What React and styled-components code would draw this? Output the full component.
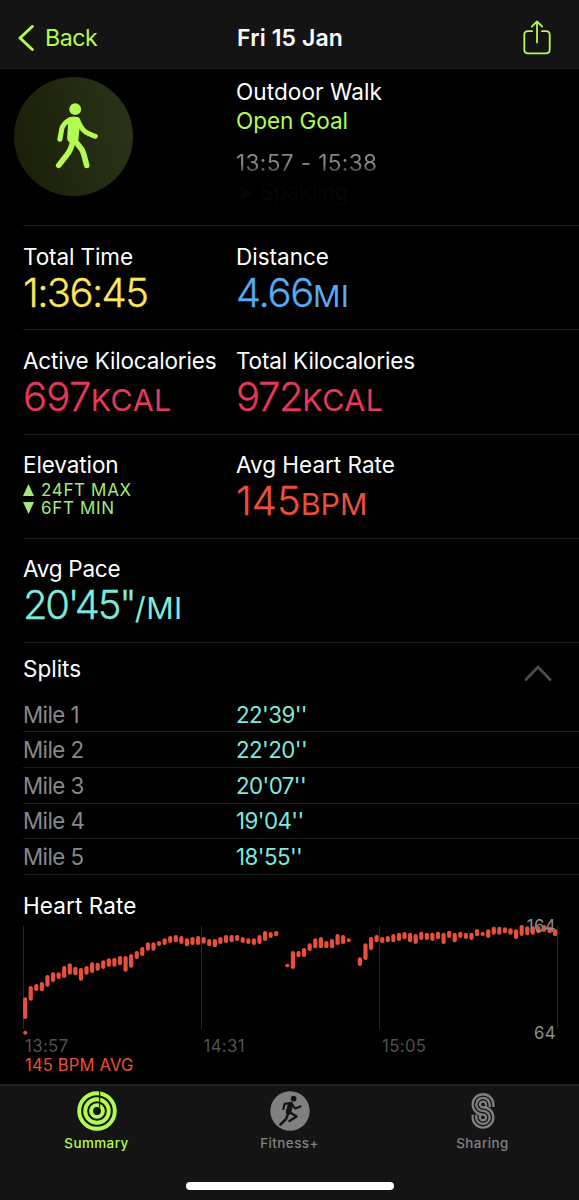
import React, {useState} from 'react';
import styled, {createGlobalStyle} from 'styled-components';

const GlobalStyle = createGlobalStyle`
    * {
        box-sizing: border-box;
    }

    body {
        margin: 0;
        background: #000000;
        color: #ffffff;
        font-family: Inter, "Liberation Sans", sans-serif;
        overflow: hidden;
    }
`;

const Screen = styled.div`
    display: flex;
    flex-direction: column;
    width: 579px;
    height: 1200px;
    background: #000000;
    overflow: hidden;
`;

const Header = styled.header`
    display: grid;
    grid-template-columns: 1fr auto 1fr;
    align-items: center;
    flex: none;
    height: 69px;
    padding: 7px 18px 0;
    background: #141414;
    border-bottom: 1px solid #1c1c1c;
`;

const BackButton = styled.button`
    display: flex;
    align-items: center;
    gap: 10px;
    height: 40px;
    padding: 0;
    border: none;
    background: none;
    color: #b4fb51;
    font: 400 23.2px/28px Inter, sans-serif;
    letter-spacing: -0.45px;
    cursor: pointer;
`;

const Title = styled.h1`
    margin: 0;
    padding-left: 1px;
    font-size: 23px;
    font-weight: 600;
    line-height: 28px;
    letter-spacing: 0.1px;
`;

const ShareButton = styled.button`
    display: flex;
    justify-self: end;
    margin: -1px 10px 0 0;
    padding: 0;
    border: none;
    background: none;
    cursor: pointer;
`;

const Intro = styled.section`
    display: grid;
    grid-template-columns: 222px 1fr;
    flex: none;
    height: 156px;
    padding: 8px 0 0 14px;
`;

const Badge = styled.div`
    display: flex;
    justify-content: center;
    align-items: center;
    width: 119px;
    height: 119px;
    border-radius: 50%;
    background: linear-gradient(80deg, #1a1e08, #2a3418);
`;

const IntroText = styled.div`
    display: flex;
    align-items: flex-start;
    flex-direction: column;
    font-size: 22.6px;
    line-height: 29px;
    letter-spacing: 0.05px;
`;

const Goal = styled.span`
    color: #b4fb51;
    letter-spacing: -0.1px;
`;

const TimeRange = styled.span`
    margin-top: 13px;
    background: linear-gradient(#88888c 55%, #3c3c3e 85%);
    background-clip: text;
    color: transparent;
    letter-spacing: 0.36px;
`;

const Place = styled.span`
    color: #060606;
    letter-spacing: -0.7px;
`;

const Row = styled.section`
    display: grid;
    grid-template-columns: 213px 1fr;
    flex: none;
    height: 104.3px;
    margin-left: 23px;
    padding-top: 16.6px;
    border-top: 1px solid #1b1b1b;
`;

const Label = styled.div`
    height: 28px;
    font-size: 22.5px;
    line-height: 28px;
    letter-spacing: ${(props) => props.$spacing || 0}px;
    white-space: nowrap;
`;

const Value = styled.div`
    font-size: 40px;
    font-weight: 300;
    line-height: 44px;
    letter-spacing: ${(props) => props.$spacing || 0}px;
    color: ${(props) => props.$color};
    -webkit-text-stroke: 0.3px ${(props) => props.$color};
    white-space: nowrap;
`;

const Unit = styled.span`
    font-size: 30.4px;
    font-weight: 400;
    letter-spacing: ${(props) => props.$spacing || 0}px;
    -webkit-text-stroke: 0;
`;

const ElevationList = styled.div`
    padding-top: 2px;
`;

const Elevation = styled.div`
    display: flex;
    align-items: center;
    gap: 7px;
    height: 18px;
    color: #a5e87d;
    font-size: 17px;
    line-height: 18px;
    letter-spacing: 0.65px;
`;

const Arrow = styled.svg`
    flex: none;
    width: 11px;
    height: 12px;
    transform: ${(props) => props.$down ? 'rotate(180deg)' : 'none'};
`;

const SplitsHeader = styled.button`
    display: flex;
    justify-content: space-between;
    flex: none;
    height: 54.6px;
    margin-left: 23px;
    padding: 12px 27px 0 0;
    border: none;
    border-top: 1px solid #1b1b1b;
    background: none;
    color: #ffffff;
    font: 400 22.5px/28px Inter, sans-serif;
    cursor: pointer;
`;

const SplitRow = styled.div`
    display: grid;
    grid-template-columns: 213px 1fr;
    flex: none;
    height: 35.6px;
    margin-left: 23px;
    padding-top: 3.8px;
    border-bottom: 1px solid #1b1b1b;
    color: #88888c;
    font-size: 22.3px;
    line-height: 28px;
    letter-spacing: -0.55px;
`;

const Pace = styled.span`
    color: #7eeadf;
`;

const HeartRate = styled.section`
    display: flex;
    flex-direction: column;
    flex: 1;
    min-height: 0;
    padding: 17px 0 0 23px;
`;

const ChartArea = styled.div`
    position: relative;
    width: 535px;
    height: 110px;
    margin-top: 5px;
`;

const AxisValue = styled.span`
    position: absolute;
    right: 2px;
    top: ${(props) => props.$top}px;
    color: #8e8e91;
    font-size: 16.8px;
    line-height: 20px;
    letter-spacing: 0.4px;
`;

const AxisTimes = styled.div`
    display: grid;
    grid-template-columns: repeat(3, 178.5px);
    margin-top: 1px;
    padding-left: 2px;
    color: #515153;
    font-size: 16.8px;
    line-height: 20px;
    letter-spacing: 0.35px;
`;

const Average = styled.div`
    padding-left: 2px;
    color: #e8503a;
    font-size: 16.6px;
    line-height: 19px;
    letter-spacing: 0.15px;
`;

const TabBar = styled.nav`
    display: grid;
    grid-template-columns: repeat(3, 1fr);
    flex: none;
    height: 116px;
    background: #141414;
    border-top: 2px solid #222222;
`;

const Tab = styled.button`
    display: flex;
    align-items: center;
    flex-direction: column;
    height: 70px;
    padding: 5px 0 0;
    border: none;
    background: none;
    color: ${(props) => props.$active ? '#b4fb51' : '#808080'};
    font: 500 13.4px/20px Inter, sans-serif;
    letter-spacing: 0.45px;
    cursor: pointer;

    > svg {
        flex: none;
        margin-bottom: 2px;
    }
`;

const HomeIndicator = styled.div`
    grid-column: 1 / -1;
    justify-self: center;
    align-self: end;
    width: 208px;
    height: 8px;
    margin-bottom: 10px;
    border-radius: 4px;
    background: #ffffff;
`;

const STATS = [
    [
        {label: 'Total Time', value: '1:36:45', color: '#fde65a', spacing: -1.6, labelSpacing: -0.1},
        {label: 'Distance', value: '4.66', unit: 'MI', color: '#56acf2', spacing: -1.3, unitSpacing: 0.4},
    ],
    [
        {label: 'Active Kilocalories', value: '697', unit: 'KCAL', color: '#e3395b', spacing: -0.7, unitSpacing: 0.5, labelSpacing: -0.17},
        {label: 'Total Kilocalories', value: '972', unit: 'KCAL', color: '#e3395b', spacing: -1.3, unitSpacing: 0.5, labelSpacing: -0.17},
    ],
    [
        {label: 'Elevation', max: '24FT MAX', min: '6FT MIN', labelSpacing: -0.1},
        {label: 'Avg Heart Rate', value: '145', unit: 'BPM', color: '#e8503a'},
    ],
    [
        {label: 'Avg Pace', value: '20\'45"', unit: '/MI', color: '#7eeadf', spacing: -2.2, unitSpacing: 0.5, labelSpacing: -0.25},
    ],
];

const SPLITS = ["22'39''", "22'20''", "20'07''", "19'04''", "18'55''"];

// [top, bottom] of every reading in thirds of a pixel, null where the watch lost contact
const READINGS = [
    [322, 387], [288, 332], [282, 303], [276, 304], [255, 290], [247, 276], [247, 267], [228, 264],
    [220, 254], [230, 256], [234, 272], [228, 254], [217, 249], [218, 242], [211, 237], [205, 230],
    [203, 230], [198, 226], [198, 245], [192, 233], [183, 207], [171, 198], [157, 182], [157, 182],
    [153, 168], [145, 165], [138, 159], [135, 157], [138, 162], [145, 169], [141, 165], [138, 165],
    [141, 161], [147, 169], [147, 172], [141, 162], [135, 159], [135, 157], [135, 153], [141, 159],
    [145, 162], [145, 165], [135, 162], [123, 153], [126, 144], [123, 139], null, [221, 232],
    [183, 237], [183, 202], [174, 201], [160, 183], [145, 175], [141, 175], [153, 175], [147, 175],
    [132, 165], [135, 162], [145, 156], null, [202, 228], [160, 210], [141, 180], [135, 157],
    [141, 159], [138, 157], [132, 157], [128, 153], [126, 148], [128, 157], [132, 162], [125, 150],
    [128, 150], [128, 153], [125, 148], [128, 162], [122, 144], [128, 157], [125, 144], [128, 147],
    [128, 150], [117, 139], [126, 138], [118, 144], [110, 134], [110, 134], [112, 130], [115, 134],
    [118, 147], [105, 138], [109, 136], [109, 134], [108, 130], [105, 126], [110, 130], [117, 139],
];

const WalkIcon = () => (
    <svg width="48" height="68" viewBox="-0.500 2.300 48 68" fill="none" stroke="#b4fb51" strokeLinecap="round"
         strokeLinejoin="round">
        <circle cx="24.700" cy="8.500" r="5.900" fill="#b4fb51" stroke="none"/>
        <path d="M18 17.500Q22 14.500 27 16.500Q30 18 29.500 22L28 38.500Q27 43 22.500 42.500Q16.600 41.500 16.600 37Z"
              fill="#b4fb51" stroke="none"/>
        <path d="M19.500 19Q12.500 23 11.300 28L9.400 38.600" strokeWidth="5"/>
        <path d="M27 19Q30 27 34 30.500Q37 33 44.800 35.600" strokeWidth="5"/>
        <path d="M22.500 40Q20.500 49.500 16.500 54L8.200 64.700" strokeWidth="5.600"/>
        <path d="M24.500 40L31.500 49Q33 51.500 36.200 64.700" strokeWidth="5.600"/>
    </svg>
);

const ShareIcon = () => (
    <svg width="28" height="35" viewBox="0 0 28 35" fill="none" stroke="#b4fb51" strokeWidth="1.8"
         strokeLinecap="round" strokeLinejoin="round">
        <path d="M9 11.200H5Q1.300 11.200 1.300 14.800V29.500Q1.300 33.300 5 33.300H23Q26.700 33.300 26.700 29.500V14.800Q26.700 11.200 23 11.200H19"/>
        <path d="M14 22.500V1.700M8.800 6.700L14 1.500L19.200 6.700"/>
    </svg>
);

const RingsIcon = () => (
    <svg width="40" height="40" viewBox="0 0 40 40" fill="none" stroke="#b4fb51" strokeWidth="3.900">
        <circle cx="20" cy="20" r="17.800"/>
        <circle cx="20" cy="20" r="11.800"/>
        <circle cx="20" cy="20" r="5.900"/>
        <path d="M22.600 0V16.500" stroke="#141414" strokeWidth="1.200"/>
    </svg>
);

const RunIcon = () => (
    <svg width="40" height="40" viewBox="0 0 40 40" fill="none" stroke="#141414" strokeLinecap="round"
         strokeLinejoin="round">
        <circle cx="20" cy="20" r="19.700" fill="#808080" stroke="none"/>
        <circle cx="23.600" cy="7.700" r="2.900" fill="#141414" stroke="none"/>
        <path d="M20.500 13.500L18.500 21" strokeWidth="5.400"/>
        <path d="M20 12L14.700 12.800L13.300 18" strokeWidth="2.200"/>
        <path d="M22 13L25 17.500L30.500 15.500" strokeWidth="2.200"/>
        <path d="M18.500 22L16 28L10.500 33.500" strokeWidth="2.600"/>
        <path d="M20 21.500L26.500 25.500L19.500 30" strokeWidth="2.600"/>
    </svg>
);

const S_PATH = 'M26.700 16V13.400A6.700 6.500 0 1 0 20 19.900A6.700 6.500 0 1 1 13.300 26.400V23.800';

const SharingIcon = () => (
    <svg width="40" height="40" viewBox="0 0 40 40" fill="none">
        <path d={S_PATH} stroke="#808080" strokeWidth="9.600"/>
        <path d={S_PATH} stroke="#141414" strokeWidth="5"/>
        <path d={S_PATH} stroke="#808080" strokeWidth="2.400"/>
    </svg>
);

const Stat = ({stat}) => (
    <div>
        <Label $spacing={stat.labelSpacing}>{stat.label}</Label>
        {stat.value ?
            <Value $color={stat.color} $spacing={stat.spacing}>
                {stat.value}{stat.unit && <Unit $spacing={stat.unitSpacing}>{stat.unit}</Unit>}
            </Value>
            :
            <ElevationList>
                <Elevation>
                    <Arrow viewBox="0 0 11 12"><path d="M5.500 0L11 12H0Z" fill="currentColor"/></Arrow>
                    {stat.max}
                </Elevation>
                <Elevation>
                    <Arrow $down viewBox="0 0 11 12"><path d="M5.500 0L11 12H0Z" fill="currentColor"/></Arrow>
                    {stat.min}
                </Elevation>
            </ElevationList>
        }
    </div>
);

const Chart = () => (
    <ChartArea>
        <svg width="535" height="110" viewBox="23 925 535 110">
            {[23.500, 201.500, 379.500, 557.500].map((x) => (
                <path key={x} d={`M${x} 926V1029`} stroke="#262626" strokeWidth="1"/>
            ))}
            {READINGS.map((r, i) => r && (
                <rect key={i} x={23.05 + i * 5.579} y={890 + r[0] / 3} width="4.200" height={(r[1] - r[0]) / 3}
                      rx="2" fill="#e8503a"/>
            ))}
            <circle cx="25.200" cy="1032.700" r="2" fill="#e8503a"/>
        </svg>
        <AxisValue $top={-8.5}>164</AxisValue>
        <AxisValue $top={98.5}>64</AxisValue>
    </ChartArea>
);

const App = () => {
    const [isOpen, setIsOpen] = useState(true);
    const [tab, setTab] = useState('Summary');

    return (
        <>
            <GlobalStyle/>
            <Screen>
                <Header>
                    <BackButton>
                        <svg width="17" height="28" viewBox="0 0 17 28" fill="none" stroke="#b4fb51"
                             strokeWidth="3" strokeLinecap="round" strokeLinejoin="round">
                            <path d="M14.300 2.500L2 14L14.300 25.500"/>
                        </svg>
                        Back
                    </BackButton>
                    <Title>Fri 15 Jan</Title>
                    <ShareButton><ShareIcon/></ShareButton>
                </Header>
                <Intro>
                    <Badge><WalkIcon/></Badge>
                    <IntroText>
                        <span>Outdoor Walk</span>
                        <Goal>Open Goal</Goal>
                        <TimeRange>13:57 - 15:38</TimeRange>
                        <Place>➤ Spalding</Place>
                    </IntroText>
                </Intro>
                {STATS.map((row) => (
                    <Row key={row[0].label}>
                        {row.map((stat) => <Stat key={stat.label} stat={stat}/>)}
                    </Row>
                ))}
                <SplitsHeader onClick={() => setIsOpen(!isOpen)}>
                    Splits
                    <svg width="28" height="38" viewBox="0 0 28 38" fill="none" stroke="#4b4b4d"
                         strokeWidth="2.800" strokeLinecap="round" strokeLinejoin="round">
                        <path d="M2 24.500L14 12L26 24.500"/>
                    </svg>
                </SplitsHeader>
                {isOpen && SPLITS.map((pace, i) => (
                    <SplitRow key={i}>
                        <span>Mile {i + 1}</span>
                        <Pace>{pace}</Pace>
                    </SplitRow>
                ))}
                <HeartRate>
                    <Label $spacing={0.1}>Heart Rate</Label>
                    <Chart/>
                    <AxisTimes>
                        <span>13:57</span>
                        <span>14:31</span>
                        <span>15:05</span>
                    </AxisTimes>
                    <Average>145 BPM AVG</Average>
                </HeartRate>
                <TabBar>
                    <Tab $active={tab === 'Summary'} onClick={() => setTab('Summary')}><RingsIcon/>Summary</Tab>
                    <Tab $active={tab === 'Fitness+'} onClick={() => setTab('Fitness+')}><RunIcon/>Fitness+</Tab>
                    <Tab $active={tab === 'Sharing'} onClick={() => setTab('Sharing')}><SharingIcon/>Sharing</Tab>
                    <HomeIndicator/>
                </TabBar>
            </Screen>
        </>
    );
};

export default App;
